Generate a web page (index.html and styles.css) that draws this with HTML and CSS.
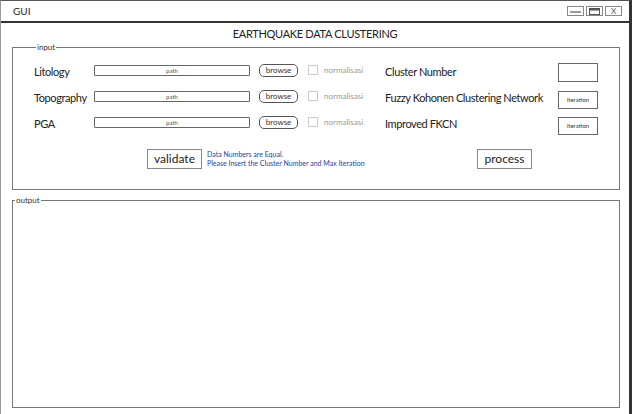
FILE: index.html
```html
<!DOCTYPE html>
<html>
<head>
<meta charset="utf-8">
<title>GUI</title>
<link rel="stylesheet" href="styles.css">
</head>
<body>
<div class="window">
  <div class="titlebar">
    <span class="title">GUI</span>
    <div class="controls">
      <span class="ctl"><svg width="11" height="6" viewBox="0 0 11 6"><line x1="0" y1="4" x2="11" y2="4" stroke="#555" stroke-width="1.2"/></svg></span>
      <span class="ctl"><svg width="11" height="7" viewBox="0 0 11 7"><rect x="0.5" y="0.5" width="10" height="6" fill="none" stroke="#555" stroke-width="1"/><rect x="0.5" y="0.5" width="10" height="2" fill="#555"/></svg></span>
      <span class="ctl x">X</span>
    </div>
  </div>
  <h1 class="heading">EARTHQUAKE DATA CLUSTERING</h1>
  <fieldset class="group input-group">
    <legend>input</legend>
    <div class="form">
      <span class="label">Litology</span>
      <div class="path">path</div>
      <span class="browse">browse</span>
      <label class="norm"><span class="check"></span>normalisasi</label>
      <span class="label">Cluster Number</span>
      <div class="numbox"></div>

      <span class="label">Topography</span>
      <div class="path">path</div>
      <span class="browse">browse</span>
      <label class="norm"><span class="check"></span>normalisasi</label>
      <span class="label">Fuzzy Kohonen Clustering Network</span>
      <div class="iter">iteration</div>

      <span class="label">PGA</span>
      <div class="path">path</div>
      <span class="browse">browse</span>
      <label class="norm"><span class="check"></span>normalisasi</label>
      <span class="label">Improved FKCN</span>
      <div class="iter">iteration</div>
    </div>
    <div class="actions">
      <span class="btn validate">validate</span>
      <div class="message">Data Numbers are Equal.<br>Please Insert the Cluster Number and Max Iteration</div>
      <span class="btn process">process</span>
    </div>
  </fieldset>
  <fieldset class="group output-group">
    <legend>output</legend>
  </fieldset>
</div>
</body>
</html>
```
FILE: styles.css
```css
* { box-sizing: border-box; }
html, body { margin: 0; padding: 0; background: #fff; }
body { font-family: Lato, "Open Sans", sans-serif; color: #222; }

.window {
  width: 632px;
  height: 414px;
  border-left: 1px solid #999;
  border-right: 3px solid #333;
  border-top: 1px solid #555;
  display: flex;
  flex-direction: column;
}

.titlebar {
  height: 22px;
  flex: none;
  border-bottom: 2px solid #333;
  display: flex;
  align-items: center;
  justify-content: space-between;
  padding: 0 7px 0 12px;
}
.title { font-size: 10px; color: #222; }
.controls { display: flex; gap: 2px; }
.ctl {
  width: 17px;
  height: 10px;
  border: 1px solid #888;
  display: flex;
  align-items: center;
  justify-content: center;
  font-size: 8px;
  color: #555;
  line-height: 1;
}

.heading {
  margin: 2px 0 0;
  font-size: 11px;
  letter-spacing: -0.3px;
  font-weight: normal;
  text-align: center;
  line-height: 18px;
  color: #222;
}

.group {
  margin: 0 9px 0 11px;
  border: 1px solid #777;
  padding: 0;
  min-width: 0;
  flex: none;
}
.group legend {
  font-size: 8px;
  line-height: 8px;
  padding: 0 1px;
  margin-left: 2px;
  color: #333;
}

.input-group {
  height: 147px;
  padding: 6px 0 0 21px;
}

.form {
  display: grid;
  grid-template-columns: 60px 165px 49px 77px 173px 40px;
  grid-auto-rows: 26px;
  align-items: center;
}
.label {
  font-size: 11px;
  letter-spacing: -0.4px;
  color: #222;
  white-space: nowrap;
  margin-top: 2px;
}
.path {
  width: 156px;
  height: 11px;
  border: 1px solid #666;
  border-radius: 1px;
  font-size: 6px;
  line-height: 9px;
  text-align: center;
  color: #555;
}
.browse {
  width: 39px;
  height: 13px;
  border: 1px solid #555;
  border-radius: 5px;
  font-size: 8px;
  line-height: 11px;
  text-align: center;
  color: #333;
}
.norm {
  display: flex;
  align-items: center;
  gap: 6px;
  font-size: 8px;
  color: #999;
}
.check {
  width: 10px;
  height: 10px;
  border: 1px solid #ccc;
}
.numbox {
  width: 40px;
  height: 19px;
  border: 1px solid #666;
  margin-top: 5px;
}
.iter {
  width: 40px;
  height: 18px;
  border: 1px solid #666;
  font-size: 6px;
  line-height: 16px;
  text-align: center;
  color: #333;
  margin-top: 7px;
}

.actions {
  display: flex;
  align-items: center;
  margin-top: 14px;
  padding-left: 113px;
}
.btn {
  height: 20px;
  border: 1px solid #888;
  font-size: 12px;
  line-height: 18px;
  text-align: center;
  color: #222;
}
.validate { width: 55px; }
.process { width: 55px; margin-left: 113px; }
.message {
  margin-left: 5px;
  font-size: 7px;
  line-height: 9px;
  color: #2b3e9c;
  width: 157px;
  white-space: nowrap;
}

.output-group {
  margin-top: 6px;
  height: 212px;
}
```
